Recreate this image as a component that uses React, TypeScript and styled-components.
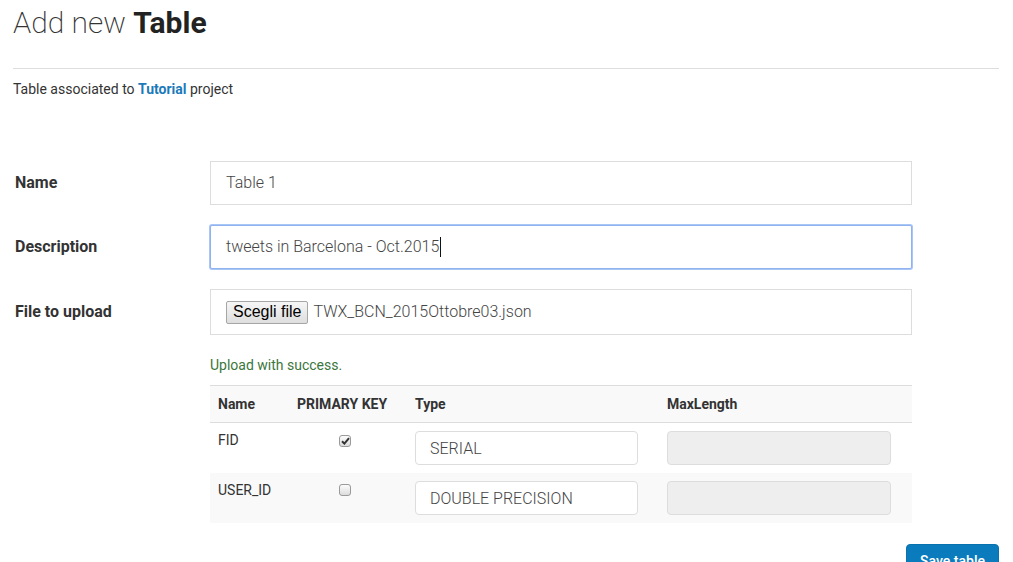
import React from "react";
import styled, { createGlobalStyle } from "styled-components";

const Global = createGlobalStyle`
  html, body { margin: 0; padding: 0; background: #fff; }
  body { font-family: Roboto, "Noto Sans", "Liberation Sans", sans-serif; color: #333; font-size: 14px; line-height: 20px; }
  * { box-sizing: border-box; }
`;

const Page = styled.div`
  padding: 5px 14px 0 13px;
  height: 562px;
  overflow: hidden;
`;

const Title = styled.h1`
  margin: 0;
  font-size: 30px;
  line-height: 35px;
  font-weight: 200;
  color: #333;
  b { font-weight: 700; color: #222; }
`;

const Rule = styled.hr`
  margin: 28px 0 0;
  border: 0;
  border-top: 1px solid #ddd;
`;

const Lead = styled.p`
  margin: 10px 0 0;
  font-size: 14px;
  line-height: 20px;
  color: #333;
  b { color: #1a7ab9; font-weight: 700; }
`;

const Form = styled.div`
  margin-top: 62px;
  display: grid;
  grid-template-columns: 197px 702px;
  row-gap: 20px;
  align-items: center;
`;

const Label = styled.div`
  padding-left: 2px;
  font-size: 16px;
  font-weight: 700;
  color: #333;
`;

const TextBox = styled.div<{ $focus?: boolean }>`
  height: 44px;
  display: flex;
  align-items: center;
  padding: 0 15px;
  font-size: 16px;
  font-weight: 300;
  color: #444;
  background: #fff;
  border: 1px solid ${(p) => (p.$focus ? "#8fb3ef" : "#ddd")};
  box-shadow: ${(p) => (p.$focus ? "0 0 0 1px #a9c6f7" : "none")};
  border-radius: ${(p) => (p.$focus ? "2px" : "0")};
`;

const Caret = styled.span`
  display: inline-block;
  width: 1px;
  height: 20px;
  background: #111;
  margin-left: 1px;
`;

const FileBox = styled.div`
  height: 46px;
  display: flex;
  align-items: center;
  gap: 5px;
  padding: 0 15px;
  border: 1px solid #ddd;
  font-size: 16px;
  font-weight: 300;
  color: #444;
`;

const NativeButton = styled.span`
  display: inline-flex;
  align-items: center;
  height: 23px;
  padding: 0 6px;
  font-family: "Liberation Sans", Arial, sans-serif;
  font-size: 16px;
  font-weight: 400;
  color: #000;
  background: linear-gradient(#f6f6f6, #dedede);
  border: 1px solid #a6a6a6;
  border-radius: 2px;
`;

const Detail = styled.div`
  grid-column: 2;
`;

const Success = styled.div`
  color: #3c763d;
  font-size: 14px;
  line-height: 20px;
`;

const Table = styled.table`
  margin-top: 10px;
  width: 702px;
  border-collapse: collapse;
  font-size: 14px;
`;

const Th = styled.th<{ $w?: number }>`
  text-align: left;
  font-weight: 700;
  color: #333;
  padding: 8px;
  line-height: 20px;
  background: #f9f9f9;
  border-top: 1px solid #ddd;
  border-bottom: 1px solid #ddd;
  width: ${(p) => (p.$w ? `${p.$w}px` : "auto")};
`;

const Tr = styled.tr<{ $striped?: boolean }>`
  background: ${(p) => (p.$striped ? "#f9f9f9" : "#fff")};
  & + & td { border-top: 1px solid #ddd; }
`;

const Td = styled.td<{ $center?: boolean }>`
  padding: 8px;
  vertical-align: top;
  line-height: 18px;
  color: #333;
  text-align: ${(p) => (p.$center ? "center" : "left")};
`;

const CellInput = styled.div<{ $disabled?: boolean }>`
  width: 94.5%;
  height: 34px;
  padding: 5px 14px 0;
  font-size: 16px;
  font-weight: 300;
  line-height: 24px;
  color: #444;
  background: ${(p) => (p.$disabled ? "#eee" : "#fff")};
  border: 1px solid #ddd;
  border-radius: 4px;
`;

const Check = styled.span`
  display: inline-flex;
  align-items: center;
  justify-content: center;
  width: 12px;
  height: 12px;
  margin: 3px 6px 0 0;
  border: 1px solid #9a9a9a;
  border-radius: 3px;
  background: linear-gradient(#fcfcfc, #dcdcdc);
  svg { display: block; }
`;

const Actions = styled.div`
  display: flex;
  justify-content: flex-end;
  margin-top: 21px;
`;

const SaveButton = styled.button`
  height: 34px;
  padding: 6px 13px;
  font-family: Roboto, "Liberation Sans", sans-serif;
  font-size: 14px;
  line-height: 20px;
  font-weight: 500;
  color: #fff;
  background: #0a7cbe;
  border: 1px solid #0a72ad;
  border-radius: 4px;
`;

const CheckBox: React.FC<{ checked?: boolean }> = ({ checked }) => (
  <Check>
    {checked && (
      <svg width="9" height="8" viewBox="0 0 9 8">
        <path d="M1 4.2 L3.4 6.6 L8 1.2" fill="none" stroke="#333" strokeWidth="2" />
      </svg>
    )}
  </Check>
);

const rows = [
  { name: "FID", pk: true, type: "SERIAL" },
  { name: "USER_ID", pk: false, type: "DOUBLE PRECISION" },
];

export default function App() {
  return (
    <>
      <Global />
      <Page>
        <Title>
          Add new <b>Table</b>
        </Title>
        <Rule />
        <Lead>
          Table associated to <b>Tutorial</b> project
        </Lead>
        <Form>
          <Label>Name</Label>
          <TextBox>Table 1</TextBox>
          <Label>Description</Label>
          <TextBox $focus>
            tweets in Barcelona - Oct.2015
            <Caret />
          </TextBox>
          <Label>File to upload</Label>
          <FileBox>
            <NativeButton>Scegli file</NativeButton>
            <span>TWX_BCN_2015Ottobre03.json</span>
          </FileBox>
          <Detail>
            <Success>Upload with success.</Success>
            <Table>
              <thead>
                <tr>
                  <Th $w={79}>Name</Th>
                  <Th $w={118}>PRIMARY KEY</Th>
                  <Th $w={252}>Type</Th>
                  <Th>MaxLength</Th>
                </tr>
              </thead>
              <tbody>
                {rows.map((r, i) => (
                  <Tr key={r.name} $striped={i % 2 === 1}>
                    <Td>{r.name}</Td>
                    <Td $center>
                      <CheckBox checked={r.pk} />
                    </Td>
                    <Td>
                      <CellInput>{r.type}</CellInput>
                    </Td>
                    <Td>
                      <CellInput $disabled />
                    </Td>
                  </Tr>
                ))}
              </tbody>
            </Table>
          </Detail>
        </Form>
        <Actions>
          <SaveButton>Save table</SaveButton>
        </Actions>
      </Page>
    </>
  );
}
